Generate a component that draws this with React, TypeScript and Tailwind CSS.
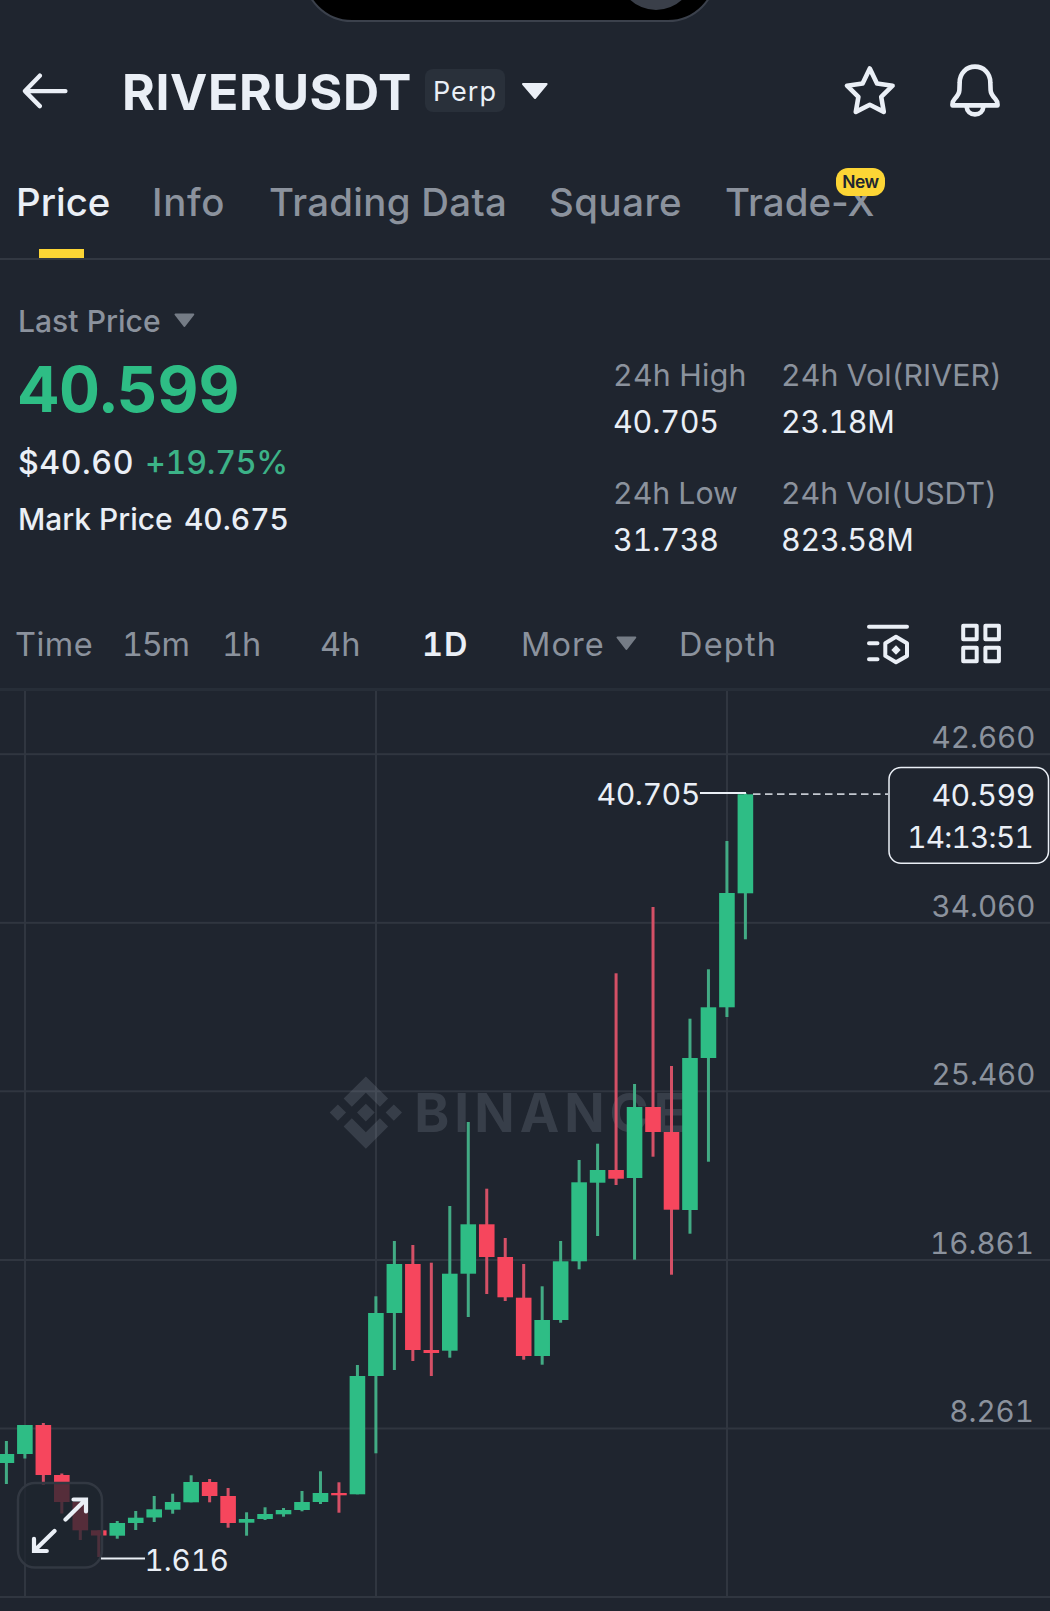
import React from "react";

const GREEN = "#2ebd85";
const RED = "#f6465d";
const GREEN_WICK = "#42ab84";
const RED_WICK = "#d45066";

type Candle = [up: 0 | 1, high: number, top: number, bottom: number, low: number];

const CANDLES: Candle[] = [
  [1, 1441, 1454, 1463, 1484],
  [1, 1425, 1425, 1454, 1458.5],
  [0, 1423, 1425, 1475, 1485],
  [0, 1473.5, 1475, 1502, 1513.5],
  [0, 1502, 1502, 1530.3, 1540],
  [0, 1530.3, 1530.3, 1535.5, 1557],
  [1, 1521, 1523, 1535.7, 1538.7],
  [1, 1511, 1517.7, 1523, 1530],
  [1, 1496, 1509.3, 1517.5, 1522],
  [1, 1493.7, 1502, 1509.7, 1513.7],
  [1, 1475.3, 1482, 1502.3, 1502.3],
  [0, 1479, 1482, 1496, 1502.3],
  [0, 1488, 1496, 1523, 1527.7],
  [1, 1512.3, 1519, 1522.7, 1535.7],
  [1, 1507.3, 1514, 1519, 1520],
  [1, 1508, 1510, 1514.3, 1516.7],
  [1, 1491, 1502, 1510, 1511.3],
  [1, 1471.3, 1493, 1502, 1504],
  [0, 1482.3, 1493, 1495.3, 1512.7],
  [1, 1365, 1376, 1494.3, 1494.3],
  [1, 1296.3, 1313, 1376, 1453.3],
  [1, 1241, 1264, 1313, 1370],
  [0, 1245, 1264, 1350, 1361],
  [0, 1262.7, 1350, 1353, 1376],
  [1, 1206, 1273.7, 1350.7, 1357.7],
  [1, 1122, 1224.3, 1273.7, 1317],
  [0, 1188.7, 1224.3, 1257, 1294],
  [0, 1238, 1257, 1297.3, 1301],
  [0, 1264, 1297.7, 1356, 1359.7],
  [1, 1286.3, 1320, 1356, 1364.7],
  [1, 1241, 1261.3, 1320, 1322.7],
  [1, 1160, 1182.3, 1261.3, 1269.3],
  [1, 1143.7, 1170, 1182.7, 1236],
  [0, 973.3, 1170, 1178.7, 1185],
  [1, 1084, 1107, 1178, 1259.7],
  [0, 907, 1107, 1132, 1156.7],
  [0, 1066, 1132, 1209.7, 1274.7],
  [1, 1018.7, 1058, 1210, 1233.7],
  [1, 969.3, 1007.3, 1058, 1161.7],
  [1, 841, 893, 1007.3, 1017],
  [1, 793.3, 794.3, 893.3, 939.3],
];

const AXIS = [
  { y: 754.2, base: 748.3, x: 1035.5, label: "42.660" },
  { y: 922.8, base: 916.8, x: 1035.5, label: "34.060" },
  { y: 1091.3, base: 1085.2, x: 1035.5, label: "25.460" },
  { y: 1260, base: 1253.8, x: 1034, label: "16.861" },
  { y: 1428.5, base: 1422.2, x: 1034, label: "8.261" },
];

function Caret({ className, size = "lg" }: { className: string; size?: "lg" | "sm" }) {
  return size === "lg" ? (
    <svg width="28" height="18" viewBox="0 0 28 18" className={className}>
      <path d="M2 2h23.6L14 16z" fill="currentColor" stroke="currentColor" strokeWidth="2" strokeLinejoin="round" />
    </svg>
  ) : (
    <svg width="21" height="15" viewBox="0 0 21 15" className={className}>
      <path d="M1.5 1.5h17.8L10.4 13z" fill="currentColor" stroke="currentColor" strokeWidth="2" strokeLinejoin="round" />
    </svg>
  );
}

function Header() {
  return (
    <header className="mt-[42px] flex h-[97px] items-center pl-[22px] pr-[50px] text-[#eaeff6]">
      <svg width="46" height="38" viewBox="22 71.5 46 38" fill="none" stroke="currentColor" strokeWidth="4.4" strokeLinecap="round" strokeLinejoin="round">
        <path d="M65.4 90.6H25M39.8 75.2 25 90.6l14.8 15" />
      </svg>
      <h1 className="ml-[54px] w-[302px] whitespace-nowrap pt-[3px] text-[50px] font-bold leading-none tracking-[0.6px]">RIVERUSDT</h1>
      <span className="ml-px h-[43px] w-[80px] rounded-lg bg-[#29303a] pl-[8px] pt-[3px] text-[27px] leading-[40px] tracking-[1px]">Perp</span>
      <Caret className="ml-[16px]" />
      <div className="ml-auto flex items-center gap-[53px]">
        <svg width="54" height="54" viewBox="843 64.3 54 54" fill="none" stroke="currentColor" strokeWidth="4.6" strokeLinejoin="round">
          <path d="M869.8 68.8 877 83.8 892.6 86 881.2 97.2 883.8 112.2 869.8 105 855.8 112.2 858.4 97.2 847 86 862.6 83.8Z" />
        </svg>
        <svg width="50" height="54" viewBox="949.6 63.8 50 54" fill="none" stroke="currentColor" strokeWidth="4.6" strokeLinejoin="round">
          <path d="M974.6 66.4C966 66.4 959.4 73 959.3 82l-.3 8c-.2 4-1.8 5.6-4.6 8.6-2.2 2.4-2.6 4-2.3 6.600h45c.3-2.600-.1-4.200-2.300-6.600-2.800-3-4.400-4.600-4.600-8.600l-.3-8c-.1-9-6.700-15.600-15.300-15.600Z" />
          <path d="M966.200 106.500c.4 4.600 3.800 7.700 8.400 7.700s8-3.100 8.400-7.700" />
        </svg>
      </div>
    </header>
  );
}

function Nav() {
  return (
    <nav className="flex h-[121px] whitespace-nowrap border-b-2 border-[#323842] pl-4 pt-[39px] text-[38.4px] font-medium leading-[48px] text-[#8b929d]">
      <div className="relative w-[136px] text-[#eaeff6]">
        Price
        <span className="absolute bottom-0 left-[23px] h-[9px] w-[45px] bg-[#fcd535]" />
      </div>
      <div className="w-[117px] tracking-[0.7px]">Info</div>
      <div className="w-[280px] tracking-[0.3px]">Trading Data</div>
      <div className="w-[176px] tracking-[0.5px]">Square</div>
      <div className="relative tracking-[0.09px]">
        Trade-X
        <span className="absolute -top-[10px] left-[111px] h-[28px] w-[49px] rounded-[12px] bg-[#fcd535] text-center text-[17.4px] font-semibold leading-[28px] tracking-[-0.39px] text-[#202630]">
          New
        </span>
      </div>
    </nav>
  );
}

function Summary() {
  return (
    <section className="flex h-[340px] whitespace-nowrap text-[#eaeff6]">
      <div className="w-[613px] pl-[18px] pt-[42px] tabular-nums">
        <div className="flex h-10 items-center text-[30.1px] font-medium text-[#8b929d]">
          Last Price
          <Caret size="sm" className="mb-1 ml-[13px] text-[#757c86]" />
        </div>
        <div className="mt-[15px] text-[63.4px] font-bold leading-[64px] tracking-[-0.1px] text-[#2ebd85]">40.599</div>
        <div className="mt-[24px] flex text-[32.1px] font-medium leading-9">
          <span className="w-[127px] tracking-[0.6px]">$40.60</span>
          <span className="tracking-[-0.2px] text-[#3cb287]">+19.75%</span>
        </div>
        <div className="mt-[20px] flex text-[29.9px] font-medium leading-9">
          <span className="w-[166px]">Mark Price</span>
          <span>40.675</span>
        </div>
      </div>
      <dl className="grid w-[437px] grid-cols-[168px_1fr] grid-rows-[118px_118px] pt-[97px] text-[30.3px] leading-9 tabular-nums">
        <div>
          <dt className="tracking-[0.25px] text-[#8b929d]">24h High</dt>
          <dd className="mt-[11px] text-[30.5px] tracking-[-0.2px]">40.705</dd>
        </div>
        <div>
          <dt className="tracking-[0.05px] text-[#8b929d]">24h Vol(RIVER)</dt>
          <dd className="mt-[11px] text-[30.5px] tracking-[-0.2px]">23.18M</dd>
        </div>
        <div>
          <dt className="text-[#8b929d]">24h Low</dt>
          <dd className="mt-[11px] text-[30.5px] tracking-[-0.2px]">31.738</dd>
        </div>
        <div>
          <dt className="tracking-[-0.05px] text-[#8b929d]">24h Vol(USDT)</dt>
          <dd className="mt-[11px] text-[30.5px] tracking-[-0.3px]">823.58M</dd>
        </div>
      </dl>
    </section>
  );
}

function Toolbar() {
  return (
    <div className="flex h-[91px] whitespace-nowrap border-b-[3px] border-[#272e38] pl-[15px] text-[32.5px] leading-[89px] text-[#8b929d]">
      <span className="w-[107px] tracking-[0.5px]">Time</span>
      <span className="w-[100px] tracking-[-1.3px] tabular-nums">15m</span>
      <span className="w-[98px] tracking-[-1px] tabular-nums">1h</span>
      <span className="w-[102px] tracking-[0.3px]">4h</span>
      <span className="w-[99px] font-semibold tracking-[1px] tabular-nums">
        <span className="text-[#eaeff6]">1D</span>
      </span>
      <span className="flex w-[158px] items-center tracking-[1.1px]">
        More
        <Caret size="sm" className="mb-[2px] ml-[11px] text-[#757c86]" />
      </span>
      <span className="w-[186px] tracking-[1.2px]">Depth</span>
      <div className="flex items-center gap-[49px] text-[#eaeff6]">
        <svg width="46" height="44" viewBox="865 622 46 44" fill="none" stroke="currentColor" strokeWidth="4" strokeLinecap="round" strokeLinejoin="round">
          <path d="M869 626.800H907M869 643.300h8.500M869 659.200h8.500" />
          <path d="M896 636.800 907 643.300V655.900L896 662.200 885.300 655.900V643.300Z" />
          <path d="M896 645.300 900.700 650 896 654.700 891.300 650Z" fill="currentColor" stroke="none" />
        </svg>
        <svg width="42" height="42" viewBox="960 622.500 42 42" fill="none" stroke="currentColor" strokeWidth="4" strokeLinejoin="round">
          <path d="M963.200 625.300h13.500v13.500h-13.500zM985.400 625.300h13.500v13.500h-13.500zM963.200 647.200h13.500v13.500h-13.500zM985.400 647.200h13.500v13.500h-13.500z" />
        </svg>
      </div>
    </div>
  );
}

function Chart() {
  return (
    <svg width="1050" height="920" viewBox="0 691 1050 920" className="block font-[Inter] tabular-nums">
      <g fill="#303640">
        {AXIS.map((a) => (
          <rect key={a.label} x="0" y={a.y - 1} width="1050" height="2" />
        ))}
        <rect x="0" y="1596" width="1050" height="2" />
        {[25, 376, 727].map((x) => (
          <rect key={x} x={x - 1} y="691" width="2" height="906" />
        ))}
      </g>

      <g fill="#8b93a1" fillOpacity="0.23">
        <g transform="translate(329.7 1076.4) scale(0.571)">
          <path d="M38.730 53.200 63.320 28.620l24.600 24.600 14.300-14.310L63.320 0l-38.900 38.900ZM0 63.310 14.300 49l14.310 14.310-14.310 14.300ZM38.730 73.410 63.320 98l24.600-24.600 14.310 14.290-38.910 38.910-38.910-38.880ZM98 63.310 112.300 49l14.310 14.300-14.310 14.320ZM78.800 63.300 63.320 47.800 47.840 63.280l15.480 15.500Z" />
        </g>
        <text x="414.300" y="1132" className="text-[53px] font-bold tracking-[5px]">BINANCE</text>
      </g>

      {CANDLES.map(([up, high, top, bottom, low], i) => {
        const x = 6.4 + i * 18.475;
        return (
          <g key={i}>
            <rect x={x - 1.5} y={high} width="3" height={low - high} fill={up ? GREEN_WICK : RED_WICK} />
            <rect x={x - 7.8} y={top} width="15.6" height={bottom - top} fill={up ? GREEN : RED} />
          </g>
        );
      })}

      <g fill="#8b929d" className="text-[29.6px]">
        {AXIS.map((a) => (
          <text key={a.label} x={a.x} y={a.base} textAnchor="end">
            {a.label}
          </text>
        ))}
      </g>

      <g fill="#eaeff6">
        <text x="596.500" y="804.500" className="text-[30.3px] tracking-[-0.5px]">40.705</text>
        <rect x="700" y="792" width="46" height="2" />
        <text x="144.500" y="1570.700" className="text-[29.5px]">1.616</text>
      </g>
      <path d="M753 794.200H888" stroke="#c3c8d0" strokeWidth="1.800" strokeDasharray="7.500 4.500" />

      <rect x="889" y="767.500" width="159.500" height="95.700" rx="12" fill="#1f252f" stroke="#eaeff6" strokeWidth="1.500" />
      <g fill="#eaeff6">
        <text x="1034.800" y="806" textAnchor="end" className="text-[30.3px] tracking-[-0.5px]">40.599</text>
        <text x="1033" y="848.200" textAnchor="end" className="text-[29.700px] tracking-[-0.700px]">14:13:51</text>
      </g>

      <rect x="18" y="1483" width="84" height="84.500" rx="17" fill="#1f252f" fillOpacity="0.75" stroke="#323842" strokeWidth="2.500" />
      <path
        d="M65.500 1519.500 85.500 1499.800M73.500 1499.500H86V1511.500M54.500 1531 34.500 1550.500M34 1538.800V1551H46.800"
        fill="none"
        stroke="#eaeff6"
        strokeWidth="4.200"
        strokeLinecap="round"
      />
      <rect x="101" y="1557.500" width="44" height="2" fill="#eaeff6" />
    </svg>
  );
}

export default function App() {
  return (
    <main className="relative flex h-[1611px] w-[1050px] flex-col overflow-hidden bg-[#1f252f] font-[Inter,sans-serif]">
      <div className="absolute -top-[76px] left-[303px] h-[98px] w-[414px] overflow-hidden rounded-full border-2 border-[#3b414c] bg-black">
        <div className="absolute bottom-[10px] left-[313px] size-[76px] rounded-full bg-[#3a3f49]" />
      </div>
      <Header />
      <Nav />
      <Summary />
      <Toolbar />
      <Chart />
    </main>
  );
}
